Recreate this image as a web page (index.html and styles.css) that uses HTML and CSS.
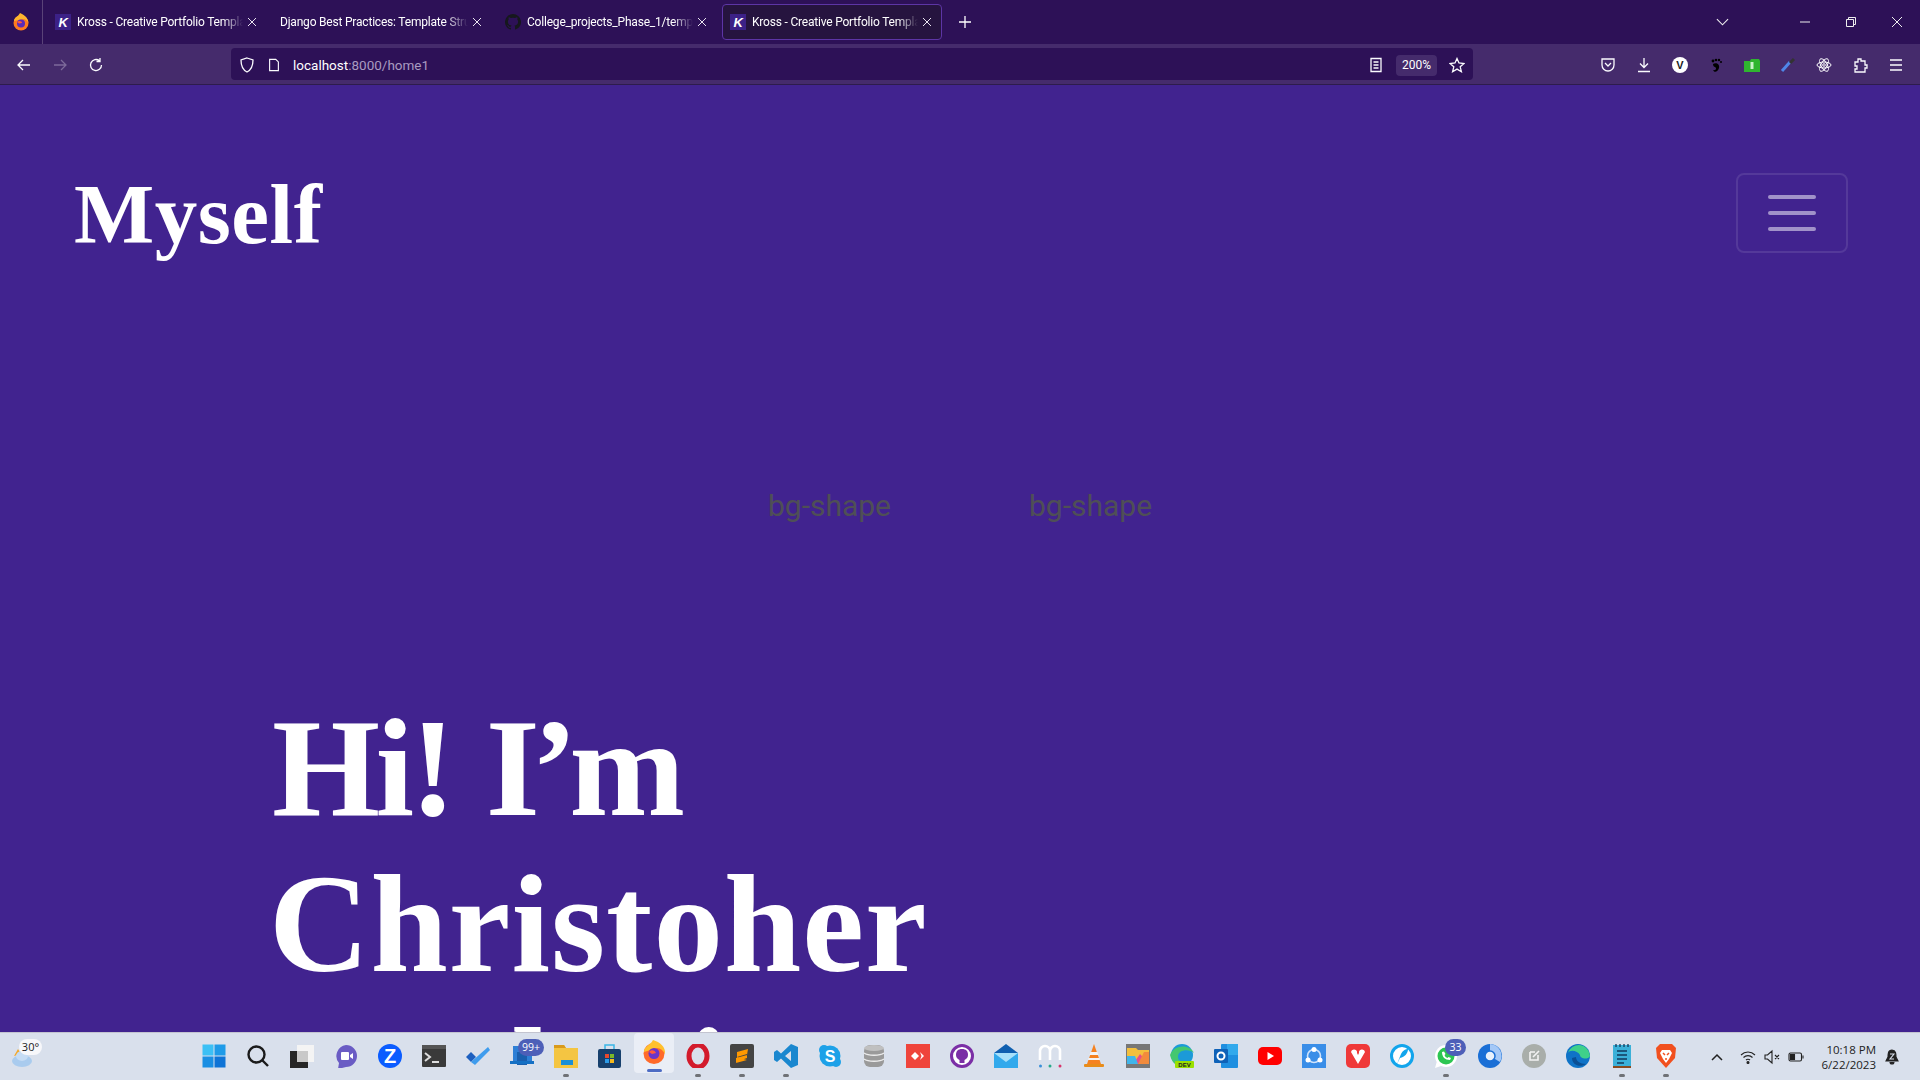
FILE: index.html
```html
<!DOCTYPE html>
<html lang="en">
<head>
<meta charset="utf-8">
<title>Kross - Creative Portfolio Template</title>
<link rel="stylesheet" href="styles.css">
</head>
<body>
<div class="tabbar">
  <div class="ff-slot">
    <svg class="i20" viewBox="0 0 20 20"><circle cx="10" cy="11" r="7.500" fill="#ff7a1f"/><path d="M3 9 C3 5 7 5 9 1 C13 3 17 5 17.500 11 C16 8 14 7 12 7 Z" fill="#ffb52e"/><circle cx="10" cy="11.500" r="4" fill="#5b2bb8"/><path d="M6 10 C8 8 11 9 11 11 L8 11.500 Z" fill="#ff5a3c"/></svg>
  </div>
  <div class="tab tab-1">
    <span class="fav">K</span><span class="tab-title">Kross - Creative Portfolio Template</span>
    <svg class="tab-x" viewBox="0 0 10 10"><path d="M1 1 L9 9 M9 1 L1 9"/></svg>
  </div>
  <div class="tab tab-2">
    <span class="tab-title">Django Best Practices: Template Structure</span>
    <svg class="tab-x" viewBox="0 0 10 10"><path d="M1 1 L9 9 M9 1 L1 9"/></svg>
  </div>
  <div class="tab tab-3">
    <svg class="gh" viewBox="0 0 16 16"><path fill="#16181d" d="M8 0a8 8 0 0 0-2.500 15.600c.4.1.5-.2.5-.4v-1.400c-2.200.5-2.700-1-2.700-1-.4-.9-.9-1.200-.9-1.200-.7-.5.1-.5.1-.5.800.1 1.200.8 1.200.8.700 1.200 1.900.9 2.300.7.100-.5.300-.9.500-1.100-1.800-.2-3.600-.9-3.600-4 0-.9.300-1.600.8-2.100-.1-.2-.4-1 .1-2.100 0 0 .7-.2 2.200.8a7.600 7.600 0 0 1 4 0c1.500-1 2.200-.8 2.200-.8.500 1.100.2 1.900.1 2.100.5.500.8 1.200.8 2.100 0 3.100-1.900 3.800-3.700 4 .3.300.6.800.6 1.500v2.200c0 .2.100.5.500.4A8 8 0 0 0 8 0z"/></svg>
    <span class="tab-title">College_projects_Phase_1/templates</span>
    <svg class="tab-x" viewBox="0 0 10 10"><path d="M1 1 L9 9 M9 1 L1 9"/></svg>
  </div>
  <div class="tab tab-active">
    <span class="fav">K</span><span class="tab-title">Kross - Creative Portfolio Template</span>
    <svg class="tab-x" viewBox="0 0 10 10"><path d="M1 1 L9 9 M9 1 L1 9"/></svg>
  </div>
  <svg class="plus" viewBox="0 0 12 12"><path d="M6 0 V12 M0 6 H12"/></svg>
  <div class="win-ctrls">
    <svg class="win chev" viewBox="0 0 14 8"><path d="M1 1 L7 7 L13 1"/></svg>
    <svg class="win min" viewBox="0 0 10 10"><path d="M0 5 H10"/></svg>
    <svg class="win res" viewBox="0 0 10 10"><path d="M0.500 2.500 H7.500 V9.500 H0.500 Z M2.500 2.500 V0.500 H9.500 V7.500 H7.500"/></svg>
    <svg class="win cls" viewBox="0 0 10 10"><path d="M0 0 L10 10 M10 0 L0 10"/></svg>
  </div>
</div>

<div class="toolbar">
  <div class="nav-btns">
    <svg class="tb" viewBox="0 0 16 16"><path d="M14 8 H2 M7 3 L2 8 L7 13"/></svg>
    <svg class="tb dim" viewBox="0 0 16 16"><path d="M2 8 H14 M9 3 L14 8 L9 13"/></svg>
    <svg class="tb" viewBox="0 0 16 16"><path d="M13.500 8 A5.500 5.500 0 1 1 11.500 3.800 M12 1 V4.500 H8.500"/></svg>
  </div>
  <div class="urlbar">
    <svg class="tb shield" viewBox="0 0 16 16"><path d="M8 1 L14 3 C14 9 12 13 8 15 C4 13 2 9 2 3 Z"/></svg>
    <svg class="tb doc" viewBox="0 0 16 16"><path d="M3 1.500 H10 L13 4.500 V14.500 H3 Z"/></svg>
    <span class="url"><span class="host">localhost</span>:8000/home1</span>
    <svg class="tb reader" viewBox="0 0 16 16"><path d="M3 1.500 H13 V14.500 H3 Z M5.500 5 H10.500 M5.500 8 H10.500 M5.500 11 H10.500"/></svg>
    <span class="zoom-pill">200%</span>
    <svg class="tb star" viewBox="0 0 16 16"><path d="M8 1.500 L10 6 L15 6.500 L11.200 9.800 L12.400 14.700 L8 12.100 L3.600 14.700 L4.800 9.800 L1 6.500 L6 6 Z"/></svg>
  </div>
  <div class="ext-btns">
    <svg class="tb" viewBox="0 0 16 16"><path d="M2 2 H14 V8 A6 6 0 0 1 2 8 Z M5 6 L8 9 L11 6"/></svg>
    <svg class="tb" viewBox="0 0 16 16"><path d="M8 1 V10 M4 6.500 L8 10.500 L12 6.500 M2 14.500 H14"/></svg>
    <svg class="tb filled" viewBox="0 0 16 16"><circle cx="8" cy="8" r="8" fill="#fff"/><text x="8" y="12" class="ext-v">V</text></svg>
    <svg class="tb filled" viewBox="0 0 16 16"><path fill="#000" d="M5 7 C8 5 12 7 11 11 C10 15 6 16 5 13 C8 14 9 11 7 10 C6 10 5 9 5 7 Z"/><circle cx="5" cy="4" r="1.400" fill="#000"/><circle cx="8" cy="3" r="1.300" fill="#000"/><circle cx="11" cy="3" r="1.200" fill="#000"/><circle cx="13" cy="5" r="1" fill="#000"/></svg>
    <svg class="tb filled" viewBox="0 0 16 16"><path fill="#2fb52f" d="M0 4 H6 L7 2 H15 L16 4 V15 H0 Z"/><rect x="6.500" y="5" width="3" height="7" fill="#c9f2c9"/></svg>
    <svg class="tb filled" viewBox="0 0 16 16"><path d="M2 14 L10 5" stroke="#4f86e8" stroke-width="3"/><path d="M10 6 L14 2" stroke="#333" stroke-width="3"/></svg>
    <svg class="tb atom" viewBox="0 0 16 16"><ellipse cx="8" cy="8" rx="7" ry="3"/><ellipse cx="8" cy="8" rx="7" ry="3" transform="rotate(60 8 8)"/><ellipse cx="8" cy="8" rx="7" ry="3" transform="rotate(120 8 8)"/><circle cx="8" cy="8" r="1.300"/></svg>
    <svg class="tb" viewBox="0 0 16 16"><path d="M6 2 H9 V4 H13 V8 H15 V11 H13 V15 H3 V12 H5 V9 H3 V5 H6 Z"/></svg>
    <svg class="tb" viewBox="0 0 16 16"><path d="M2 3 H14 M2 8 H14 M2 13 H14"/></svg>
  </div>
</div>

<main class="page">
  <header class="site-head">
    <div class="brand">Myself</div>
    <button class="toggler" type="button" aria-label="Toggle navigation"><span class="bar"></span><span class="bar"></span><span class="bar"></span></button>
  </header>
  <div class="shapes"><span>bg-shape</span><span>bg-shape</span></div>
  <h1 class="hero"><span class="line line-1">Hi! <span class="tight">I’m</span></span><span class="line line-2">Christoher</span><span class="line line-3">Harleni</span></h1>
</main>

<footer class="taskbar">
  <div class="weather">
    <svg class="ti" viewBox="0 0 24 24"><path d="M8 4 L4 11 L11 9 Z" fill="#f5a623"/><ellipse cx="12" cy="16" rx="10" ry="6" fill="#a9cbee"/><ellipse cx="12" cy="11" rx="6" ry="5" fill="#c6dcf4"/></svg>
    <span class="temp">30°</span>
  </div>
  <div class="apps">
    <div class="app"><svg class="ti" viewBox="0 0 24 24"><rect x="0.500" y="0.500" width="11" height="11" fill="#3cc0f5"/><rect x="12.500" y="0.500" width="11" height="11" fill="#1f9be8"/><rect x="0.500" y="12.500" width="11" height="11" fill="#1a8fe3"/><rect x="12.500" y="12.500" width="11" height="11" fill="#0f74d6"/></svg></div>
    <div class="app"><svg class="ti" viewBox="0 0 24 24"><circle cx="10.500" cy="10.500" r="8" fill="none" stroke="#1b1b1b" stroke-width="2.400"/><path d="M16.500 16.500 L22 22" stroke="#1b1b1b" stroke-width="2.400"/></svg></div>
    <div class="app"><svg class="ti" viewBox="0 0 24 24"><rect x="7" y="1" width="17" height="17" fill="#f4f4f4"/><rect x="0" y="7" width="18" height="18" fill="#262626"/><rect x="7" y="7" width="11" height="11" fill="#c8c8c8"/></svg></div>
    <div class="app"><svg class="ti" viewBox="0 0 24 24"><path d="M12 1 A11 11 0 1 1 12 23 L4 25 L5 19 A11 11 0 0 1 12 1 Z" fill="#6a5cc4"/><rect x="7" y="8" width="8" height="8" rx="1" fill="#fff"/><path d="M16 11 L19 9 V15 L16 13 Z" fill="#fff"/></svg></div>
    <div class="app"><svg class="ti" viewBox="0 0 24 24"><circle cx="12" cy="12" r="12" fill="#0b5cff"/><text x="12" y="19" class="ti-z">Z</text></svg></div>
    <div class="app"><svg class="ti" viewBox="0 0 24 24"><rect y="1" width="24" height="22" rx="1" fill="#3a3a3a"/><rect y="1" width="24" height="4" fill="#555"/><path d="M3 9 L8 13 L3 17" fill="none" stroke="#ddd" stroke-width="2"/><path d="M10 18 H17" stroke="#ddd" stroke-width="2"/></svg></div>
    <div class="app"><svg class="ti" viewBox="0 0 24 24"><path d="M0 13 L5 8 L10 13 L5 18 Z" fill="#1d5fbf"/><path d="M5 18 L22 3 L24 6 L9 21 Z" fill="#3f9ced"/></svg></div>
    <div class="app"><svg class="ti" viewBox="0 0 24 24"><rect x="3" y="2" width="19" height="15" fill="#2d7fd6"/><rect x="7" y="8" width="10" height="13" fill="#1a5fae"/><rect x="0" y="17" width="24" height="3" fill="#1570c4"/></svg><span class="badge badge-wide">99+</span></div>
    <div class="app running"><svg class="ti" viewBox="0 0 24 24"><path d="M0 1 H10 L12 4 H24 V24 H0 Z" fill="#f4c542"/><path d="M0 1 H10 L12 4 H0 Z" fill="#d99a1c"/><rect x="7" y="16" width="12" height="5" fill="#1a8fd8"/></svg></div>
    <div class="app"><svg class="ti" viewBox="0 0 24 24"><rect y="5" width="23" height="19" rx="2" fill="#17406d"/><path d="M7 5 V1 H16 V5" fill="none" stroke="#3ab5e6" stroke-width="1.500"/><rect x="7" y="10" width="4" height="4" fill="#e8482e"/><rect x="12" y="10" width="4" height="4" fill="#7ab829"/><rect x="7" y="15" width="4" height="4" fill="#2c9be8"/><rect x="12" y="15" width="4" height="4" fill="#f4b91e"/></svg></div>
    <div class="app active"><svg class="ti" viewBox="0 0 24 24"><circle cx="12" cy="13.500" r="10.500" fill="#ff6a2a"/><path d="M2 12 C2 6 8 6 11 0 C18 2 24 7 23 14 C21 10 18 8 15 8 Z" fill="#ffc02e"/><circle cx="12" cy="13.500" r="5.500" fill="#6a35c9"/><path d="M7 12 C9 9 13 10 14 13 L10 14 Z" fill="#ff5a3c"/></svg></div>
    <div class="app running"><svg class="ti" viewBox="0 0 24 24"><ellipse cx="12" cy="12" rx="9" ry="11" fill="none" stroke="#d31b2c" stroke-width="5"/></svg></div>
    <div class="app running"><svg class="ti" viewBox="0 0 24 24"><rect width="24" height="24" rx="2" fill="#444"/><path d="M18 5 L7 8 V13 L17 10 V14 L6 18 V14 L17 11 Z M7 13 L17 16 L6 19" fill="#ff9800"/></svg></div>
    <div class="app running"><svg class="ti" viewBox="0 0 24 24"><path d="M17 0 L24 3 V21 L17 24 L7 14.500 L3 18 L0 16 V8 L3 6 L7 9.500 Z M17 7 L11 12 L17 17 Z" fill="#1a87cf"/></svg></div>
    <div class="app"><svg class="ti" viewBox="0 0 24 24"><circle cx="12" cy="12" r="10.500" fill="#1da1e8"/><circle cx="6" cy="6" r="5" fill="#1da1e8"/><circle cx="18" cy="18" r="5" fill="#1da1e8"/><text x="12" y="18" class="ti-s">S</text></svg></div>
    <div class="app"><svg class="ti" viewBox="0 0 24 24"><rect x="2" y="1" width="20" height="22" rx="6" fill="#9a9a9a"/><ellipse cx="12" cy="4" rx="10" ry="3" fill="#c0c0c0"/><path d="M2 9 C6 12 18 12 22 9 M2 15 C6 18 18 18 22 15" stroke="#ececec" stroke-width="1.500" fill="none"/></svg></div>
    <div class="app"><svg class="ti" viewBox="0 0 24 24"><rect width="24" height="24" fill="#ef443b"/><path d="M9 8 L13 12 L9 16 L5 12 Z M14 8 L18 12 L14 16 L15.500 12 Z" fill="#fff"/></svg></div>
    <div class="app"><svg class="ti" viewBox="0 0 24 24"><circle cx="12" cy="12" r="10.500" fill="#fff" stroke="#7b2fa6" stroke-width="3"/><path fill="#7b2fa6" d="M12 5 C8 5 6 7 6 11 C6 14 8 15 9.500 16 V19 H14.500 V16 C16 15 18 14 18 11 C18 7 16 5 12 5 Z"/></svg></div>
    <div class="app"><svg class="ti" viewBox="0 0 24 24"><path d="M0 9 L12 0 L24 9 V10 H0 Z" fill="#0f5fb0"/><rect y="9" width="24" height="15" fill="#32a9ec"/><path d="M0 9 L12 18 L24 9" fill="#a8e0fa"/></svg></div>
    <div class="app"><svg class="ti" viewBox="0 0 24 24"><path d="M2 16 V7 A5 5 0 0 1 12 7 V16 M12 7 A5 5 0 0 1 22 7 V16" fill="none" stroke="#fff" stroke-width="2.600"/><circle cx="2.500" cy="22" r="1.500" fill="#3a8fd8"/><circle cx="12" cy="22" r="1.500" fill="#27a889"/><circle cx="22" cy="22" r="1.500" fill="#d8336b"/></svg></div>
    <div class="app"><svg class="ti" viewBox="0 0 24 24"><path d="M12 0 L19 20 H5 Z" fill="#f58220"/><path d="M8.500 8 H15.500 L16.500 11 H7.500 Z M6.500 14 H17.500 L18 16 H6 Z" fill="#f4f4f4"/><rect x="2" y="20" width="20" height="3" rx="1" fill="#e88c1a"/></svg></div>
    <div class="app"><svg class="ti" viewBox="0 0 24 24"><rect width="24" height="24" fill="#777"/><path d="M1 4 H10 L12 6 H23 V20 H1 Z" fill="#f3bf3d"/><path d="M7 20 L14 10 L23 20 Z" fill="#e84d8a"/><path d="M12 20 L18 8 H23 V20 Z" fill="#f28b3c"/><path d="M1 12 H9 L12 20 H1 Z" fill="#40b5ea"/></svg></div>
    <div class="app"><svg class="ti" viewBox="0 0 24 24"><circle cx="12" cy="11" r="11" fill="#1c9ad8"/><path d="M0 11 C4 0 20 0 24 9 C20 5 8 5 8 13 C8 18 14 19 18 17 C14 24 3 24 0 11 Z" fill="#44c770"/><rect x="5" y="17" width="19" height="7" rx="1" fill="#9be000"/><text x="14.500" y="23" class="ti-dev">DEV</text></svg></div>
    <div class="app"><svg class="ti" viewBox="0 0 24 24"><rect x="7" y="0" width="17" height="24" rx="1" fill="#1f8fe0"/><rect x="13" y="0" width="11" height="11" fill="#32a9ec"/><rect x="0" y="5" width="14" height="14" rx="1" fill="#0f62b8"/><circle cx="7" cy="12" r="3.500" fill="none" stroke="#fff" stroke-width="2"/></svg></div>
    <div class="app"><svg class="ti" viewBox="0 0 24 24"><rect y="3" width="24" height="18" rx="5" fill="#f00"/><path d="M9.500 8 L16 12 L9.500 16 Z" fill="#fff"/></svg></div>
    <div class="app"><svg class="ti" viewBox="0 0 24 24"><rect width="24" height="24" fill="#3a8ee8"/><circle cx="12" cy="12" r="6.500" fill="none" stroke="#cfe3fb" stroke-width="1.600"/><circle cx="12" cy="5.500" r="2.500" fill="#fff"/><circle cx="6" cy="16" r="2.500" fill="#fff"/><circle cx="18" cy="16" r="2.500" fill="#fff"/></svg></div>
    <div class="app"><svg class="ti" viewBox="0 0 24 24"><rect width="24" height="24" rx="5" fill="#ef3939"/><path d="M5 8 L12 20 L19 8 A3 3 0 0 0 13 9 L12 11 L11 9 A3 3 0 0 0 5 8 Z" fill="#fff"/></svg></div>
    <div class="app"><svg class="ti" viewBox="0 0 24 24"><circle cx="12" cy="12" r="10.500" fill="#fff" stroke="#12a5ec" stroke-width="3"/><path d="M7 20 L11 10 C13 6 16 5 18 5 C18 9 15 13 10 14 Z" fill="#12a5ec"/></svg></div>
    <div class="app running"><svg class="ti" viewBox="0 0 24 24"><circle cx="12" cy="12" r="11" fill="#fff"/><circle cx="12" cy="12" r="8.500" fill="#2cc652"/><path d="M8 8 C8 13 11 16 16 16 L17 14 L14.500 13 L13.500 14 C12 13.500 11 12.500 10.500 11 L11.500 10 L10 7.500 Z" fill="#fff"/><path d="M1 24 L3 17 L7 22 Z" fill="#fff"/></svg><span class="badge">33</span></div>
    <div class="app"><svg class="ti" viewBox="0 0 24 24"><circle cx="12" cy="12" r="12" fill="#1a6fd6"/><path d="M12 0 A12 12 0 0 1 22 18 L12 12 Z" fill="#a4c8f7"/><circle cx="12" cy="12" r="5" fill="#e8f0fb" stroke="#1a6fd6" stroke-width="1.500"/></svg></div>
    <div class="app"><svg class="ti" viewBox="0 0 24 24"><circle cx="12" cy="12" r="12" fill="#a9aeaa"/><path d="M8 8 H13 M8 8 V16 H16 V11 M11 13 L17 7" fill="none" stroke="#f3f3f3" stroke-width="1.600"/></svg></div>
    <div class="app"><svg class="ti" viewBox="0 0 24 24"><circle cx="12" cy="12" r="12" fill="#0f73c7"/><path d="M2 9 C6 -2 22 -2 24 12 C22 16 14 15 14 11 C12 7 4 5 2 9 Z" fill="#3fd08a"/><path d="M6 14 C6 21 14 24 20 20 C14 20 10 17 10 13 Z" fill="#0a4f94"/></svg></div>
    <div class="app running"><svg class="ti" viewBox="0 0 24 24"><rect x="3" y="1" width="18" height="21" fill="#3bb0d8"/><path d="M3 22 H21 V24 H3 Z" fill="#8a4a1e"/><path d="M7 7 H17 M7 11 H17 M7 15 H17 M7 19 H14" stroke="#123a5c" stroke-width="1.600"/><path d="M6 0 V3 M10 0 V3 M14 0 V3 M18 0 V3" stroke="#123a5c" stroke-width="1.300"/></svg></div>
    <div class="app running"><svg class="ti" viewBox="0 0 24 24"><path d="M6 0 H18 L22 4 L21 14 L12 24 L3 14 L2 4 Z" fill="#f1501f"/><path d="M8 6 H16 L18 9 L15 15 L12 19 L9 15 L6 9 Z" fill="#fff"/><path d="M9 9 L11 11 M15 9 L13 11 M12 14 V16" stroke="#f1501f" stroke-width="1.500"/></svg></div>
  </div>
  <div class="tray">
    <svg class="tray-i chev-up" viewBox="0 0 12 8"><path d="M1 7 L6 2 L11 7"/></svg>
    <svg class="tray-i wifi" viewBox="0 0 16 16"><path d="M1 6 C5 2 11 2 15 6 M3.500 8.500 C6 6 10 6 12.500 8.500 M6 11 C7 10 9 10 10 11"/><circle cx="8" cy="13.500" r="1" fill="#222"/></svg>
    <svg class="tray-i spk" viewBox="0 0 16 16"><path d="M1 6 H3.500 L8 2 V14 L3.500 10 H1 Z M11 6 L15 10 M15 6 L11 10"/></svg>
    <svg class="tray-i bat" viewBox="0 0 16 16"><rect x="1" y="4" width="12.500" height="8" rx="1.500"/><rect x="2.500" y="5.500" width="4" height="5" fill="#222"/><path d="M15 6.500 V9.500"/></svg>
    <div class="clock"><span>10:18 PM</span><span>6/22/2023</span></div>
    <svg class="tray-i bell" viewBox="0 0 16 16"><path d="M8 1 C4 1 4 5 4 8 L2 12 H14 L12 8 C12 5 12 1 8 1 Z M6 13 A2 2 0 0 0 10 13" fill="#222"/><path d="M6 5 H10 L6 10 H10" stroke="#d9e0ec"/></svg>
  </div>
</footer>
</body>
</html>
```

FILE: styles.css
```css
* { box-sizing: border-box; }
html, body { margin: 0; height: 100%; }
body {
  height: 1080px;
  overflow: hidden;
  display: flex;
  flex-direction: column;
  background: #41238f;
  font-family: "Open Sans", "Noto Sans", sans-serif;
}

/* tab strip */
.tabbar {
  height: 44px;
  flex: none;
  display: flex;
  align-items: center;
  background: #2d1157;
  color: #fff;
  font-family: Roboto, "Open Sans", sans-serif;
  font-size: 12px;
  letter-spacing: -.2px;
}
.ff-slot {
  width: 43px;
  height: 44px;
  display: flex;
  align-items: center;
  justify-content: center;
  border-right: 1px solid #5a4378;
}
.i20 { width: 20px; height: 20px; }
.tab {
  height: 36px;
  display: flex;
  align-items: center;
  padding: 0 14px 0 8px;
  flex: none;
  width: 224px;
  margin-left: 1px;
}
.tab-1 { margin-left: 4px; }
.tab-active {
  width: 220px;
  background: #26143f;
  border: 1px solid #5d35a5;
  border-radius: 4px;
  padding: 0 9px 0 7px;
}
.fav {
  width: 16px;
  height: 16px;
  flex: none;
  display: flex;
  align-items: center;
  justify-content: center;
  background: #3c2187;
  font: italic 700 13px "Liberation Sans", sans-serif;
  margin-right: 6px;
}
.gh { width: 16px; height: 16px; flex: none; margin-right: 6px; }
.tab-title {
  flex: 1;
  min-width: 0;
  overflow: hidden;
  white-space: nowrap;
  -webkit-mask-image: linear-gradient(to right, #000 88%, transparent 100%);
  mask-image: linear-gradient(to right, #000 88%, transparent 100%);
}
.tab-x {
  width: 10px;
  height: 10px;
  flex: none;
  margin-left: 4px;
  fill: none;
  stroke: #e9e4f0;
  stroke-width: 1;
}
.plus {
  width: 12px;
  height: 12px;
  margin-left: 17px;
  fill: none;
  stroke: #fff;
  stroke-width: 1.300;
}
.win-ctrls {
  margin-left: auto;
  display: flex;
  align-items: center;
  padding-right: 18px;
}
.win { width: 10px; height: 10px; fill: none; stroke: #eee; stroke-width: 1; }
.chev { width: 13px; height: 8px; margin-right: 71px; stroke-width: 1.200; }
.min { margin-right: 36px; }
.res { margin-right: 36px; }

/* toolbar */
.toolbar {
  height: 41px;
  flex: none;
  display: flex;
  align-items: center;
  background: #452b6c;
  border-bottom: 1px solid #2d1c4c;
}
.tb {
  width: 16px;
  height: 16px;
  flex: none;
  fill: none;
  stroke: #fbfbfe;
  stroke-width: 1.300;
}
.tb.dim { stroke: #7d6a9a; }
.filled { stroke: none; }
.nav-btns {
  width: 231px;
  display: flex;
  gap: 20px;
  padding: 2px 0 0 16px;
  flex: none;
}
.urlbar {
  width: 1242px;
  height: 32px;
  flex: none;
  display: flex;
  align-items: center;
  background: #2d1157;
  border-radius: 4px;
  padding: 2px 8px 0;
  color: #a99bc0;
  font-family: Roboto, "Open Sans", sans-serif;
  font-size: 13.500px;
}
.doc { margin-left: 12px; width: 14px; }
.url { margin-left: 12px; flex: 1; }
.host { color: #fff; }
.reader { margin-right: 12px; }
.zoom-pill {
  width: 41px;
  height: 21px;
  display: flex;
  align-items: center;
  justify-content: center;
  background: #452b6c;
  border-radius: 4px;
  color: #fff;
  font-size: 12px;
  margin-right: 12px;
}
.ext-btns {
  flex: none;
  display: flex;
  gap: 20px;
  margin-left: 127px;
  padding-top: 2px;
}
.atom ellipse, .atom circle { stroke-width: 1; }
.ext-v {
  font: 700 11px "Liberation Sans", sans-serif;
  text-anchor: middle;
  fill: #222;
}

/* page */
.page {
  flex: 1;
  min-height: 0;
  overflow: hidden;
  background: #41238f;
  color: #fff;
}
.site-head {
  display: flex;
  justify-content: space-between;
  align-items: center;
  margin-top: 88px;
  height: 80px;
  padding: 0 72px 0 74px;
}
.brand {
  font: 700 85px/80px "Liberation Serif", serif;
  letter-spacing: .5px;
  padding-top: 2px;
}
.toggler {
  width: 112px;
  height: 80px;
  background: transparent;
  border: 2px solid rgba(255, 255, 255, .1);
  border-radius: 8px;
  padding: 0;
  display: flex;
  flex-direction: column;
  align-items: center;
  justify-content: center;
  gap: 12px;
}
.bar {
  width: 48px;
  height: 4px;
  border-radius: 2px;
  background: #a192c9;
}
.shapes {
  display: flex;
  justify-content: center;
  gap: 138px;
  margin-top: 235px;
  font: 30px/36px Roboto, sans-serif;
  color: #4f4f56;
}
.hero {
  margin: 166px 0 0;
  padding-left: 272px;
  font: 700 139px/156px "Liberation Serif", serif;
}
.line { display: block; white-space: nowrap; }
.line-1 { letter-spacing: -4.500px; word-spacing: 4px; }
.tight { letter-spacing: -8.500px; }
.line-2 { letter-spacing: 1px; margin-left: -3px; }
.line-3 { margin-top: -3px; }

/* taskbar */
.taskbar {
  height: 48px;
  flex: none;
  display: flex;
  align-items: center;
  background: #d9e0ec;
  color: #1a1a1a;
  border-top: 1px solid #c3c4d0;
}
.ti { width: 24px; height: 24px; display: block; }
.weather { width: 192px; flex: none; position: relative; padding-left: 10px; }
.temp {
  position: absolute;
  left: 19px;
  top: -6px;
  width: 23px;
  height: 16px;
  border-radius: 8px;
  background: #f7f7fa;
  font: 11px/16px "Open Sans", sans-serif;
  text-align: center;
}
.apps { display: flex; flex: none; }
.app {
  width: 44px;
  height: 47px;
  display: flex;
  align-items: center;
  justify-content: center;
  position: relative;
  padding-bottom: 2px;
}
.app.running::after, .app.active::after {
  content: "";
  position: absolute;
  left: 19px;
  bottom: 3px;
  width: 6px;
  height: 3px;
  border-radius: 2px;
  background: #6f7176;
}
.app.active { background: #eaeef6; border-radius: 4px; height: 40px; width: 40px; margin: 0 2px; }
.app.active::after { left: 13px; bottom: 1px; width: 15px; background: #4d6cc4; }
.badge {
  position: absolute;
  top: 6px;
  left: 21px;
  width: 21px;
  height: 17px;
  border-radius: 9px;
  background: #4d5fb8;
  color: #fff;
  font: 10.500px/17px "Open Sans", sans-serif;
  text-align: center;
}
.badge-wide { left: 18px; width: 26px; }
.ti-z { font: 700 20px "Liberation Sans", sans-serif; text-anchor: middle; fill: #fff; }
.ti-s { font: 700 16px "Liberation Sans", sans-serif; text-anchor: middle; fill: #fff; }
.ti-dev { font: 700 6px "Liberation Sans", sans-serif; text-anchor: middle; fill: #222; }
.tray {
  flex: 1;
  display: flex;
  align-items: center;
  padding-left: 23px;
}
.tray-i { width: 16px; height: 16px; flex: none; fill: none; stroke: #222; stroke-width: 1.100; }
.chev-up { width: 12px; height: 8px; margin-right: 17px; stroke-width: 1.500; }
.wifi { margin-right: 8px; }
.spk { margin-right: 8px; }
.clock {
  display: flex;
  flex-direction: column;
  align-items: flex-end;
  width: 72px;
  font-size: 11.500px;
  line-height: 15px;
  color: #222;
}
.bell { margin-left: 8px; }
```
